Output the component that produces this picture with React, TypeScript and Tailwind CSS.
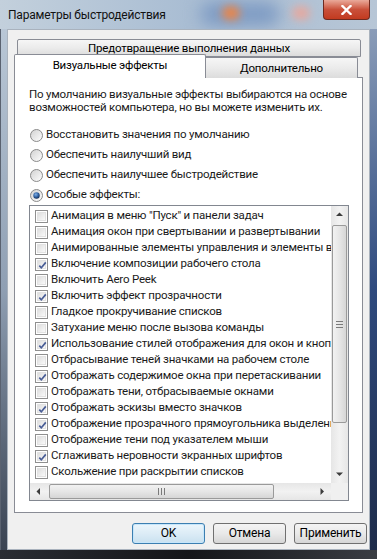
import React from "react";

const items: [string, boolean][] = [
  ['Анимация в меню "Пуск" и панели задач', false],
  ["Анимация окон при свертывании и развертывании", false],
  ["Анимированные элементы управления и элементы внутри окна", false],
  ["Включение композиции рабочего стола", true],
  ["Включить Aero Peek", false],
  ["Включить эффект прозрачности", true],
  ["Гладкое прокручивание списков", false],
  ["Затухание меню после вызова команды", false],
  ["Использование стилей отображения для окон и кнопок", true],
  ["Отбрасывание теней значками на рабочем столе", false],
  ["Отображать содержимое окна при перетаскивании", true],
  ["Отображать тени, отбрасываемые окнами", false],
  ["Отображать эскизы вместо значков", true],
  ["Отображение прозрачного прямоугольника выделения", true],
  ["Отображение тени под указателем мыши", false],
  ["Сглаживать неровности экранных шрифтов", true],
  ["Скольжение при раскрытии списков", false],
];

const radios: [string, boolean][] = [
  ["Восстановить значения по умолчанию", false],
  ["Обеспечить наилучший вид", false],
  ["Обеспечить наилучшее быстродействие", false],
  ["Особые эффекты:", true],
];

function Radio({ on }: { on: boolean }) {
  return (
    <svg width="13" height="13" viewBox="0 0 13 13" className="shrink-0">
      <defs>
        <linearGradient id="rg" x1="0" y1="0" x2="1" y2="1">
          <stop offset="0" stopColor="#d0d0d0" />
          <stop offset="1" stopColor="#ffffff" />
        </linearGradient>
        <radialGradient id="rd" cx="0.4" cy="0.35" r="0.7">
          <stop offset="0" stopColor="#7fb0e8" />
          <stop offset="0.6" stopColor="#2a5a9a" />
          <stop offset="1" stopColor="#13284a" />
        </radialGradient>
      </defs>
      <circle cx="6.5" cy="6.5" r="6" fill="url(#rg)" stroke="#8a8a8a" strokeWidth="1" />
      {on && <circle cx="6.5" cy="6.5" r="3.2" fill="url(#rd)" />}
    </svg>
  );
}

function Check({ on }: { on: boolean }) {
  return (
    <div className="w-[13px] h-[13px] shrink-0 border border-[#8f8f8f] bg-white p-[1px]">
      <div className="w-full h-full border border-[#e2e2e2] bg-gradient-to-br from-[#dedede] to-[#fafafa] relative">
        {on && (
          <svg width="11" height="11" viewBox="0 0 11 11" className="absolute -left-[1px] -top-[1px]">
            <path d="M2.3 5.6 L4.3 7.8 L8.8 2.4" fill="none" stroke="#4a5e96" strokeWidth="1.7" />
          </svg>
        )}
      </div>
    </div>
  );
}

function Arrow({ dir }: { dir: "up" | "down" | "left" | "right" }) {
  const pts =
    dir === "up"
      ? "1,5 4.5,1.5 8,5"
      : dir === "down"
      ? "1,1.5 4.5,5 8,1.5"
      : dir === "left"
      ? "5,1 1.5,4.5 5,8"
      : "1.5,1 5,4.5 1.5,8";
  const w = dir === "up" || dir === "down" ? 9 : 7;
  const h = dir === "up" || dir === "down" ? 7 : 9;
  const vb = `0 0 ${w} ${h}`;
  return (
    <svg width={w} height={h} viewBox={vb}>
      <polygon points={pts} fill="#3c3c3c" />
    </svg>
  );
}

const font = { fontFamily: 'Roboto, "Liberation Sans", sans-serif' };

export default function App() {
  return (
    <div
      className="w-[377px] h-[559px] overflow-hidden flex flex-col bg-[#1c1f26] text-black text-[11.5px] tracking-[-0.2px]"
      style={font}
    >
      {/* title bar */}
      <div className="h-[29px] relative overflow-hidden bg-gradient-to-r from-[#c3d0dc] via-[#a9bdd3] to-[#b7c6d6] flex items-start justify-between">
        <div className="absolute left-[200px] top-[2px] w-[80px] h-[24px] rounded-full bg-[#7f9cc4] blur-[8px]" />
        <div className="absolute left-[222px] top-[6px] w-[18px] h-[14px] rounded-full bg-[#e8854a] blur-[4px]" />
        <div className="absolute left-[292px] top-[6px] w-[18px] h-[14px] rounded-full bg-[#e4a9a0] blur-[4px]" />
        <div className="relative pl-[8px] pt-[7px] text-[12px] leading-[16px] text-[#111] whitespace-nowrap">
          Параметры быстродействия
        </div>
        <div className="relative mr-[7px] w-[47px] h-[20px] rounded-b-[4px] border border-t-0 border-[#6e2a20] bg-gradient-to-b from-[#e9a99a] via-[#c9503a] to-[#c23a1f] flex items-center justify-center">
          <svg width="11" height="10" viewBox="0 0 11 10">
            <path d="M1.5 1 L9.5 9 M9.5 1 L1.5 9" stroke="#ffffff" strokeWidth="2.3" strokeLinecap="square" />
          </svg>
        </div>
      </div>

      {/* body */}
      <div className="flex flex-1">
        <div className="w-[7px] bg-gradient-to-b from-[#b9c7d6] via-[#8f9fb3] to-[#3a4352] border-l border-[#5a6270]" />
        <div className="w-[363px] h-[521px] bg-[#f0f0f0] border border-[#a9b2bd] pl-[6px] pt-[9px] flex flex-col">
          {/* tabs */}
          <div className="ml-[3px] w-[344px] h-[18px] border border-[#898c95] rounded-t-[2px] bg-gradient-to-b from-[#f6f6f6] via-[#ebebeb] to-[#dcdcdc] leading-[17px] text-center">
            Предотвращение выполнения данных
          </div>
          <div className="flex items-end -mt-[3px] relative z-10 h-[24px]">
            <div className="w-[192px] h-[24px] border border-b-0 border-[#898c95] rounded-t-[2px] bg-white leading-[20px] text-center">
              Визуальные эффекты
            </div>
            <div className="w-[152px] h-[21px] border border-l-0 border-b-0 border-[#898c95] rounded-tr-[2px] bg-gradient-to-b from-[#f6f6f6] via-[#ebebeb] to-[#dcdcdc] leading-[21px] text-center">
              Дополнительно
            </div>
          </div>
          <div className="-mt-[1px] w-[349px] h-[436px] border border-[#898c95] bg-white pl-[14px] pt-[10px] flex flex-col">
            <div className="leading-[13px] text-[#1a1a1a] whitespace-nowrap">
              По умолчанию визуальные эффекты выбираются на основе
              <br />
              возможностей компьютера, но вы можете изменить их.
            </div>
            <div className="mt-[11px] flex flex-col">
              {radios.map(([t, on]) => (
                <div key={t} className="h-[20px] flex items-center gap-[3px] pl-[1px] text-[#1a1a1a]">
                  <Radio on={on} />
                  <span>{t}</span>
                </div>
              ))}
            </div>
            {/* list box */}
            <div className="w-[320px] h-[296px] border border-[#828790] flex flex-col bg-white">
              <div className="flex flex-1 min-h-0">
                <div className="w-[301px] overflow-hidden pt-[2px]">
                  {items.map(([t, on]) => (
                    <div key={t} className="h-[16px] flex items-center pl-[5px] gap-[3px] whitespace-nowrap text-[#1a1a1a]">
                      <Check on={on} />
                      <span>{t}</span>
                    </div>
                  ))}
                </div>
                {/* vertical scrollbar */}
                <div className="w-[17px] flex flex-col bg-gradient-to-r from-[#e6e6e6] via-[#f2f2f2] to-[#e6e6e6]">
                  <div className="h-[17px] flex items-center justify-center">
                    <Arrow dir="up" />
                  </div>
                  <div className="mt-[2px] mx-[1px] h-[198px] border border-[#9a9a9a] rounded-[2px] bg-gradient-to-r from-[#f2f2f2] via-[#e6e6e6] to-[#d6d6d6] flex flex-col items-center justify-center gap-[2px]">
                    <div className="w-[7px] h-[1px] bg-[#7a7a7a]" />
                    <div className="w-[7px] h-[1px] bg-[#7a7a7a]" />
                    <div className="w-[7px] h-[1px] bg-[#7a7a7a]" />
                  </div>
                  <div className="flex-1" />
                  <div className="h-[17px] flex items-center justify-center">
                    <Arrow dir="down" />
                  </div>
                </div>
              </div>
              {/* horizontal scrollbar */}
              <div className="h-[17px] flex">
                <div className="w-[301px] flex bg-gradient-to-b from-[#e6e6e6] via-[#f2f2f2] to-[#e6e6e6]">
                  <div className="w-[17px] flex items-center justify-center">
                    <Arrow dir="left" />
                  </div>
                  <div className="ml-[2px] my-[1px] w-[225px] border border-[#9a9a9a] rounded-[2px] bg-gradient-to-b from-[#f2f2f2] via-[#e6e6e6] to-[#d6d6d6] flex items-center justify-center gap-[2px]">
                    <div className="w-[1px] h-[7px] bg-[#7a7a7a]" />
                    <div className="w-[1px] h-[7px] bg-[#7a7a7a]" />
                    <div className="w-[1px] h-[7px] bg-[#7a7a7a]" />
                  </div>
                  <div className="flex-1" />
                  <div className="w-[17px] flex items-center justify-center">
                    <Arrow dir="right" />
                  </div>
                </div>
                <div className="w-[17px] bg-[#f0f0f0]" />
              </div>
            </div>
          </div>
          {/* buttons */}
          <div className="mt-[10px] flex justify-end gap-[8px] pr-[2px]">
            <div className="w-[73px] h-[21px] rounded-[3px] border border-[#3c7fb1] bg-gradient-to-b from-[#ecf6fc] via-[#dcecf6] to-[#c9e1f0] shadow-[inset_0_0_0_1px_#c6e6fb] text-[12px] leading-[19px] text-center">
              OK
            </div>
            <div className="w-[73px] h-[21px] rounded-[3px] border border-[#707070] bg-gradient-to-b from-[#f4f4f4] via-[#e9e9e9] to-[#d6d6d6] text-[12px] leading-[19px] text-center">
              Отмена
            </div>
            <div className="w-[73px] h-[21px] rounded-[3px] border border-[#707070] bg-gradient-to-b from-[#f4f4f4] via-[#e9e9e9] to-[#d6d6d6] text-[12px] leading-[19px] text-center">
              Применить
            </div>
          </div>
        </div>
        <div className="w-[7px] bg-gradient-to-b from-[#8a9cb8] via-[#2f4a7e] to-[#1e2c4a]" />
      </div>
      <div className="h-[9px] bg-gradient-to-r from-[#2a2d33] via-[#151619] to-[#3a3d44]" />
    </div>
  );
}
